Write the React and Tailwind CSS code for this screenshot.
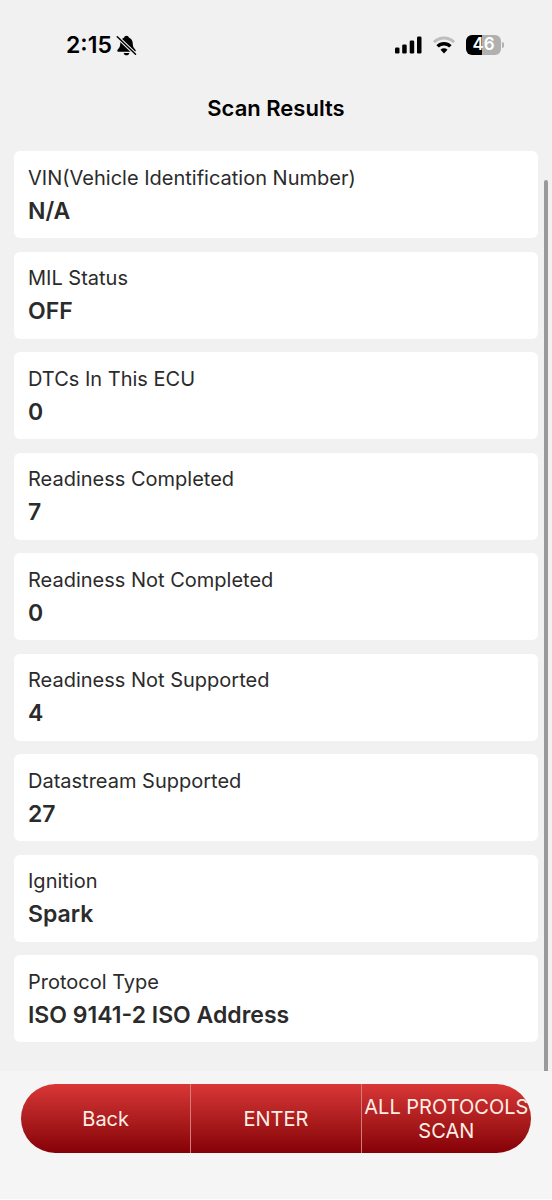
import React from 'react'

const results = [
  { label: 'VIN(Vehicle Identification Number)', value: 'N/A' },
  { label: 'MIL Status', value: 'OFF' },
  { label: 'DTCs In This ECU', value: '0' },
  { label: 'Readiness Completed', value: '7' },
  { label: 'Readiness Not Completed', value: '0' },
  { label: 'Readiness Not Supported', value: '4' },
  { label: 'Datastream Supported', value: '27' },
  { label: 'Ignition', value: 'Spark' },
  { label: 'Protocol Type', value: 'ISO 9141-2 ISO Address' },
]

const actions = ['Back', 'ENTER', 'ALL PROTOCOLS SCAN']

const BellOff = () => (
  <svg width="21" height="21" viewBox="0 0 20 20" aria-hidden="true">
    <path
      d="M10 .6c-1.200 0-2 .8-2.200 1.700C5.400 3.200 4.200 5.200 4.100 7.700c-.1 3-.6 4.200-1.800 5.400-.7.700-1.100 1.200-1.100 1.800 0 .7.500 1.100 1.300 1.100h15c.8 0 1.300-.4 1.300-1.100 0-.6-.4-1.100-1.100-1.800-1.200-1.200-1.700-2.400-1.800-5.400-.1-2.500-1.300-4.500-3.700-5.400C12 1.400 11.200.6 10 .6z"
    />
    <path d="M7.300 17.200h5.400c-.2 1.300-1.300 2.200-2.700 2.200s-2.500-.9-2.700-2.200z" />
    <path d="M1 1.500l17.800 17" stroke="#f1f1f1" strokeWidth="3.400" />
    <path d="M1.200 1.700l17.400 16.600" stroke="#000" strokeWidth="1.400" strokeLinecap="round" />
  </svg>
)

const Signal = () => (
  <svg width="28" height="18" viewBox="0 0 28 18" aria-hidden="true">
    <rect x="1" y="11.500" width="4.500" height="6" rx="1.300" />
    <rect x="8.200" y="8.500" width="4.500" height="9" rx="1.300" />
    <rect x="15.700" y="4.500" width="4.500" height="13" rx="1.300" />
    <rect x="23" y=".5" width="4.500" height="17" rx="1.300" />
  </svg>
)

const Wifi = () => (
  <svg width="24" height="18" viewBox="0 0 24 18" fill="none" aria-hidden="true">
    <path d="M2 6.200a14.200 14.200 0 0 1 20 0" stroke="#bdbdbd" strokeWidth="3" />
    <path d="M5.600 10.400a9 9 0 0 1 12.800 0" stroke="#000" strokeWidth="3.400" />
    <path d="M12 17.400l-3.500-3.600a4.900 4.900 0 0 1 7 0z" fill="#000" />
  </svg>
)

const Battery = () => (
  <div className="flex items-center gap-px">
    <div className="flex h-5 w-[35px] items-center justify-center rounded-md bg-linear-to-r from-black from-46% to-[#b0b0b0] to-46% text-[17px] font-semibold text-white">
      46
    </div>
    <div className="h-1.5 w-0.5 rounded-r-full bg-[#b0b0b0]" />
  </div>
)

const StatusBar = () => (
  <div className="flex h-[90px] items-center justify-between pr-12 pl-[66px]">
    <div className="flex items-center gap-1">
      <span className="text-[23px] font-semibold">2:15</span>
      <BellOff />
    </div>
    <div className="flex items-center gap-2.5">
      <Signal />
      <Wifi />
      <Battery />
    </div>
  </div>
)

const ResultCard = ({ label, value }) => (
  <div className="flex h-[87px] flex-col justify-center rounded-md bg-white px-3.5">
    <dt className="text-xl leading-[33px] text-[#2b2b2b]">{label}</dt>
    <dd className="text-[23px] leading-[33px] font-semibold text-[#2b2b2b]">{value}</dd>
  </div>
)

export default function App() {
  return (
    <div className="flex min-h-screen flex-col bg-[#f1f1f1] font-['Inter',sans-serif] text-black">
      <header>
        <StatusBar />
        <h1 className="text-center text-[22px] leading-9 font-semibold">Scan Results</h1>
      </header>

      <main className="relative flex flex-1 flex-col px-3.5 pt-[25px] pb-[29px]">
        <dl className="flex flex-1 flex-col justify-between">
          {results.map((item) => (
            <ResultCard key={item.label} label={item.label} value={item.value} />
          ))}
        </dl>
        {/* scroll indicator */}
        <div className="absolute top-[54px] right-1 bottom-0 w-1 rounded-t-full bg-[#9a9a9a]" />
      </main>

      <footer className="border-b border-white bg-[#f5f5f5] px-[21px] pt-[13px] pb-[46px]">
        <div className="flex h-[69px] divide-x divide-[#d77a7c] overflow-hidden rounded-full bg-linear-to-b from-[#d93636] to-[#850006]">
          {actions.map((action) => (
            <button
              key={action}
              type="button"
              className="flex min-w-0 flex-1 items-center justify-center text-center text-xl leading-6 text-[#fdeee6]"
            >
              {action}
            </button>
          ))}
        </div>
      </footer>
    </div>
  )
}
